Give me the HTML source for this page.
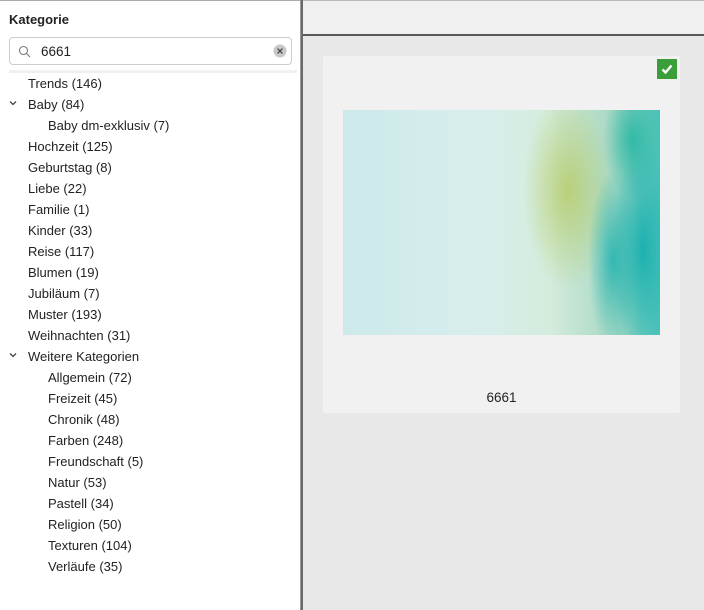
<!DOCTYPE html>
<html><head><meta charset="utf-8"><style>
*{margin:0;padding:0;box-sizing:border-box}
body{width:704px;height:610px;overflow:hidden;background:#fff;font-family:"Liberation Sans",sans-serif;font-size:13px;color:#222;position:relative}
#left{position:absolute;left:0;top:0;width:300px;height:610px;background:#fff;border-top:1px solid #aaa}
#vline{position:absolute;left:300px;top:0;width:3px;height:610px;background:#6a6a6a;border-left:1px solid #999}
h1{position:absolute;left:9px;top:11px;font-size:13px;font-weight:bold;color:#222}
#search{position:absolute;left:9px;top:36px;width:283px;height:28px;border:1px solid #ccc;border-radius:4px;background:#fff}
#search .t{position:absolute;left:31px;top:6px;font-size:13.5px}
#sep{position:absolute;left:9px;top:69px;width:288px;height:3px;background:#f0f0f0}
.it{position:absolute;left:28px;white-space:nowrap}
.in{left:48px}
.ch{position:absolute;left:9px;width:8px;height:8px}
#top{position:absolute;left:303px;top:0;width:401px;height:34px;background:#f0f0f0;border-top:1px solid #bbb}
#hline{position:absolute;left:301px;top:34px;width:403px;height:2px;background:#5a5a5a}
#main{position:absolute;left:303px;top:36px;width:401px;height:574px;background:#e8e8e8}
#card{position:absolute;left:323px;top:56px;width:357px;height:357px;background:#f1f1f1;border-radius:2px}
#chk{position:absolute;left:657px;top:59px;width:20px;height:20px;background:#3a9f3a}
#img{position:absolute;left:343px;top:110px;width:317px;height:225px;
background:
radial-gradient(ellipse 30px 110px at 300px 140px,#1bb1b0 0%,rgba(27,177,176,0) 100%),
radial-gradient(ellipse 25px 90px at 270px 150px,rgba(0,170,170,.7) 0%,rgba(0,170,170,0) 100%),
radial-gradient(ellipse 45px 100px at 225px 80px,rgba(180,200,90,.75) 0%,rgba(180,200,90,0) 100%),
radial-gradient(ellipse 30px 60px at 290px 30px,rgba(30,180,160,.8) 0%,rgba(30,180,160,0) 100%),
linear-gradient(90deg,#cde9ea 0%,#d8eeed 45%,#d4ecdc 65%,#a9d8c4 85%,#4cc3b9 100%)}
#cap{position:absolute;left:323px;top:390px;width:357px;text-align:center;font-size:13.5px}
</style></head><body>
<div id="left">
<h1>Kategorie</h1>
<div id="search">
<svg style="position:absolute;left:8px;top:7px" width="13" height="13" viewBox="0 0 13 13"><circle cx="5.5" cy="5.5" r="4" fill="none" stroke="#777" stroke-width="1.1"/><line x1="8.5" y1="8.5" x2="12" y2="12" stroke="#777" stroke-width="1.1"/></svg>
<span class="t">6661</span>
<svg style="position:absolute;left:263px;top:6px" width="14" height="14" viewBox="0 0 14 14"><circle cx="7" cy="7" r="6.5" fill="#c8c8c8"/><path d="M4.6 4.6L9.4 9.4M9.4 4.6L4.6 9.4" stroke="#444" stroke-width="1.3"/></svg>
</div>
<div id="sep"></div>
<div class="it" style="top:75px">Trends (146)</div>
<svg class="ch" style="top:98px" viewBox="0 0 8 8"><path d="M1 2.5L4 5.5L7 2.5" fill="none" stroke="#444" stroke-width="1.3"/></svg>
<div class="it" style="top:96px">Baby (84)</div>
<div class="it in" style="top:117px">Baby dm-exklusiv (7)</div>
<div class="it" style="top:138px">Hochzeit (125)</div>
<div class="it" style="top:159px">Geburtstag (8)</div>
<div class="it" style="top:180px">Liebe (22)</div>
<div class="it" style="top:201px">Familie (1)</div>
<div class="it" style="top:222px">Kinder (33)</div>
<div class="it" style="top:243px">Reise (117)</div>
<div class="it" style="top:264px">Blumen (19)</div>
<div class="it" style="top:285px">Jubiläum (7)</div>
<div class="it" style="top:306px">Muster (193)</div>
<div class="it" style="top:327px">Weihnachten (31)</div>
<svg class="ch" style="top:350px" viewBox="0 0 8 8"><path d="M1 2.5L4 5.5L7 2.5" fill="none" stroke="#444" stroke-width="1.3"/></svg>
<div class="it" style="top:348px">Weitere Kategorien</div>
<div class="it in" style="top:369px">Allgemein (72)</div>
<div class="it in" style="top:390px">Freizeit (45)</div>
<div class="it in" style="top:411px">Chronik (48)</div>
<div class="it in" style="top:432px">Farben (248)</div>
<div class="it in" style="top:453px">Freundschaft (5)</div>
<div class="it in" style="top:474px">Natur (53)</div>
<div class="it in" style="top:495px">Pastell (34)</div>
<div class="it in" style="top:516px">Religion (50)</div>
<div class="it in" style="top:537px">Texturen (104)</div>
<div class="it in" style="top:558px">Verläufe (35)</div>
</div>
<div id="top"></div>
<div id="main"></div>
<div id="hline"></div>
<div id="vline"></div>
<div id="card"></div>
<div id="chk"><svg width="20" height="20" viewBox="0 0 20 20"><path d="M5.5 10.5L8.5 13.5L14.5 6.5" fill="none" stroke="#fff" stroke-width="2.4"/></svg></div>
<div id="img"></div>
<div id="cap">6661</div>
</body></html>
